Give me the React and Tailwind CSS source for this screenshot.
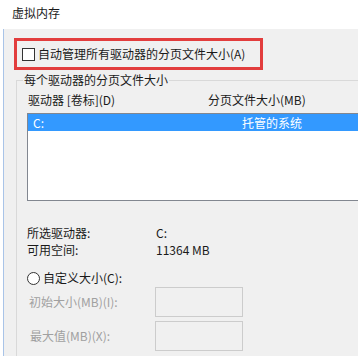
export default function App() {
  const font = { fontFamily: '"Noto Sans CJK SC", "Noto Sans", sans-serif' };

  return (
    <div style={font} className="w-[358px] h-[356px] overflow-hidden bg-white text-[12px] text-[#1a1a1a]">
      {/* Title */}
      <div className="h-[29px] pt-[5px] pl-[12px] leading-[16px]">虚拟内存</div>

      <div className="flex h-[327px]">
        <div className="w-[3px] bg-white" />
        <div className="w-[1px] bg-[#a9c4e8]" />
        <div className="flex-1 bg-[#f0f0f0] overflow-hidden">
          {/* Auto manage (highlighted) */}
          <div className="mt-[9px] ml-[10px] w-[249px] h-[32px] border-[3px] border-[#e23d3d] flex items-center pl-[5px] gap-[3px]">
            <div className="w-[13px] h-[13px] border border-[#333333] bg-white shrink-0" />
            <span className="leading-[16px] whitespace-nowrap">自动管理所有驱动器的分页文件大小(A)</span>
          </div>

          {/* Group box */}
          <div className="mt-[10px] ml-[12px] w-[400px] h-[300px] border-t border-l border-[#d9d9d9]">
            <div className="-mt-[9px] ml-[6px] h-[16px] leading-[16px] px-[1px] bg-[#f0f0f0] w-fit whitespace-nowrap">
              每个驱动器的分页文件大小
            </div>

            <div className="mt-[4px] h-[16px] leading-[16px] pl-[11px] flex whitespace-nowrap">
              <span className="w-[180px]">驱动器 [卷标](D)</span>
              <span>分页文件大小(MB)</span>
            </div>

            <div className="mt-[5px] ml-[10px] w-[400px] h-[88px] border border-[#828790] bg-white">
              <div className="h-[17px] bg-[#3399ff] text-white flex items-center pl-[5px] leading-[16px] whitespace-nowrap">
                <span className="w-[209px]">C:</span>
                <span>托管的系统</span>
              </div>
            </div>

            <div className="mt-[24px] h-[16px] leading-[16px] pl-[10px] flex whitespace-nowrap">
              <span className="w-[129px]">所选驱动器:</span>
              <span>C:</span>
            </div>
            <div className="mt-[1px] h-[16px] leading-[16px] pl-[10px] flex whitespace-nowrap">
              <span className="w-[129px]">可用空间:</span>
              <span>11364 MB</span>
            </div>

            <div className="mt-[12px] h-[16px] leading-[16px] pl-[10px] flex items-center gap-[3px] whitespace-nowrap">
              <div className="w-[13px] h-[13px] rounded-full border border-[#333333] bg-white shrink-0" />
              <span>自定义大小(C):</span>
            </div>

            <div className="mt-[1px] h-[30px] pl-[12px] flex items-center whitespace-nowrap">
              <span className="w-[126px] text-[#a0a0a0]">初始大小(MB)(I):</span>
              <div className="w-[88px] h-[30px] border border-[#cccccc] bg-[#f0f0f0]" />
            </div>
            <div className="mt-[4px] h-[30px] pl-[13px] flex items-center whitespace-nowrap">
              <span className="w-[125px] text-[#a0a0a0]">最大值(MB)(X):</span>
              <div className="w-[88px] h-[30px] border border-[#cccccc] bg-[#f0f0f0]" />
            </div>
          </div>
        </div>
      </div>
    </div>
  );
}
